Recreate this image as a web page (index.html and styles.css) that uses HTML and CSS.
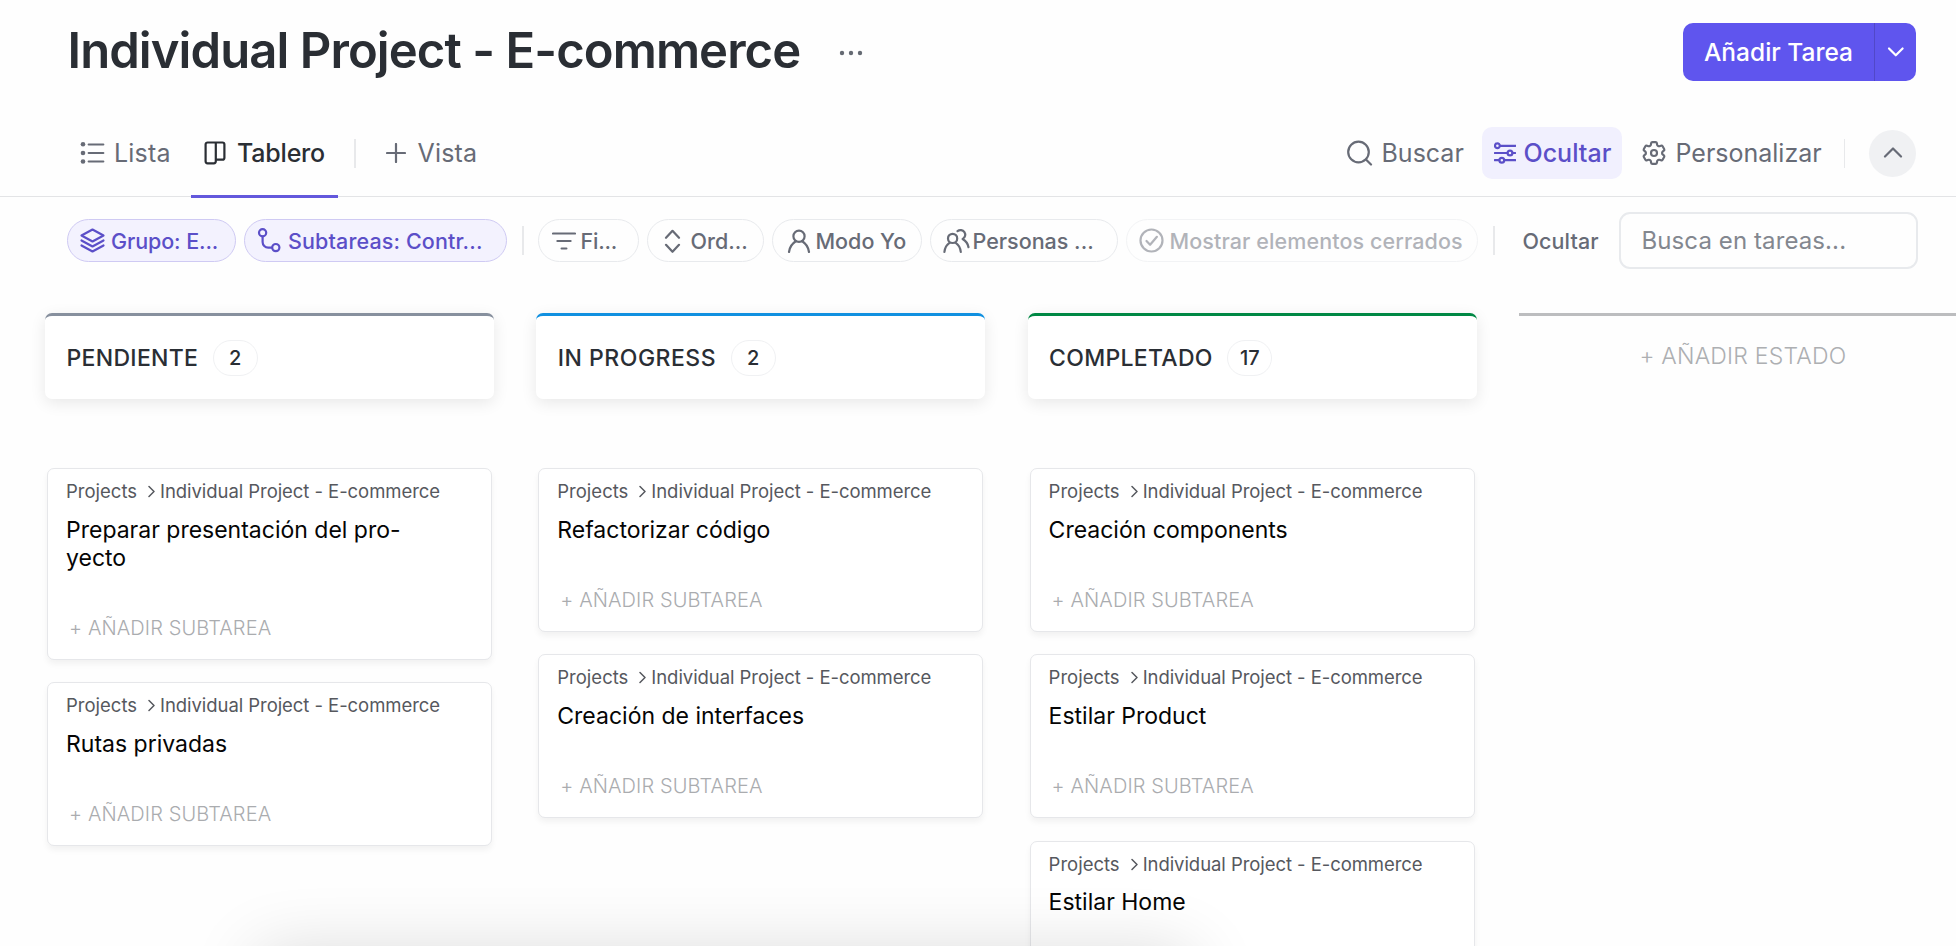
FILE: index.html
```html
<!DOCTYPE html>
<html lang="es">
<head>
<meta charset="utf-8">
<title>Individual Project - E-commerce</title>
<link rel="stylesheet" href="styles.css">
</head>
<body>
<header class="title-row">
  <h1 class="title">Individual Project - E-commerce</h1>
  <svg class="dots" width="24" height="6" viewBox="0 0 24 6"><circle cx="3" cy="3" r="2.2"/><circle cx="12" cy="3" r="2.2"/><circle cx="21" cy="3" r="2.2"/></svg>
  <div class="add-task">
    <button class="add-main">Añadir Tarea</button>
    <button class="add-more" aria-label="Más"><svg class="icon" width="18" height="12" viewBox="0 0 18 12"><path d="M2 2.500 8.800 9.300l6.800-6.800"/></svg></button>
  </div>
</header>

<nav class="nav">
  <a class="tab tab-list"><svg class="icon" width="25" height="24" viewBox="0 0 25 24"><g class="fill"><circle cx="3" cy="3.2" r="2.3"/><circle cx="3" cy="12" r="2.3"/><circle cx="3" cy="20.5" r="2.3"/></g><path d="M8.7 3.5h14.6M8.7 12h14.6M8.7 20.5h14.6"/></svg><span>Lista</span></a>
  <a class="tab tab-board"><svg class="icon" width="22" height="24" viewBox="0 0 22 24"><path d="M3.6 1.5h14.8a2 2 0 0 1 2 2v13.2a2 2 0 0 1-2 2h-6.6M3.6 1.5a2 2 0 0 0-2 2v16.8a2 2 0 0 0 2 2h6.2a2 2 0 0 0 2-2V1.5"/></svg><span>Tablero</span></a>
  <i class="rule"></i>
  <a class="tab tab-add"><svg class="icon" width="20" height="20" viewBox="0 0 20 20"><path d="M1 10h18M10 1v18"/></svg><span>Vista</span></a>

  <div class="tools">
    <a class="tool tool-search"><svg class="icon" width="26" height="26" viewBox="0 0 26 26"><circle cx="11.500" cy="12" r="10.3"/><path d="m19 19.5 5 5"/></svg><span>Buscar</span></a>
    <a class="tool tool-hide"><svg class="icon" width="22" height="22" viewBox="0 0 22 22"><path d="M6 3.8h15.5M.8 11h12.4M18.6 11h2.6M.8 18.2h4.4M10.6 18.2h10.9"/><circle cx="3.4" cy="3.8" r="2.4"/><circle cx="16" cy="11" r="2.4"/><circle cx="7.8" cy="18.2" r="2.4"/></svg><span>Ocultar</span></a>
    <a class="tool tool-custom"><svg class="icon" width="26" height="26" viewBox="1.2 1.2 21.6 21.6"><path class="thin" d="M9.594 3.94c.09-.542.56-.94 1.11-.94h2.593c.55 0 1.02.398 1.11.94l.213 1.281c.063.374.313.686.645.87.074.04.147.083.22.127.325.196.72.257 1.075.124l1.217-.456a1.125 1.125 0 0 1 1.37.49l1.296 2.247a1.125 1.125 0 0 1-.26 1.431l-1.003.827c-.293.241-.438.613-.43.992a7.723 7.723 0 0 1 0 .255c-.008.378.137.75.43.991l1.004.827c.424.35.534.955.26 1.43l-1.298 2.247a1.125 1.125 0 0 1-1.369.491l-1.217-.456c-.355-.133-.75-.072-1.076.124a6.47 6.47 0 0 1-.22.128c-.331.183-.581.495-.644.869l-.213 1.281c-.09.543-.56.94-1.11.94h-2.594c-.55 0-1.019-.398-1.11-.94l-.213-1.281c-.062-.374-.312-.686-.644-.87a6.52 6.52 0 0 1-.22-.127c-.325-.196-.72-.257-1.076-.124l-1.217.456a1.125 1.125 0 0 1-1.369-.49l-1.297-2.247a1.125 1.125 0 0 1 .26-1.431l1.004-.827c.292-.24.437-.613.43-.991a6.932 6.932 0 0 1 0-.255c.007-.38-.138-.751-.43-.992l-1.004-.827a1.125 1.125 0 0 1-.26-1.43l1.297-2.247a1.125 1.125 0 0 1 1.37-.491l1.216.456c.356.133.751.072 1.076-.124.072-.044.146-.086.22-.128.332-.183.582-.495.644-.869l.214-1.28Z"/><circle class="thin" cx="12" cy="12" r="2.5"/></svg><span>Personalizar</span></a>
    <i class="rule"></i>
    <button class="collapse" aria-label="Contraer"><svg class="icon" width="20" height="12" viewBox="0 0 20 12"><path d="m2 9.500 8-8 8 8"/></svg></button>
  </div>
</nav>

<section class="filters">
  <button class="pill pill-on pill-group"><svg class="icon" width="26" height="26" viewBox="0 0 26 26"><path d="M12.500 1.500 23.500 7.500 12.500 13.500 1.500 7.500ZM1.500 12.500l11 6 11-6M1.500 17.500l11 6 11-6"/></svg><span>Grupo: E...</span></button>
  <button class="pill pill-on pill-sub"><svg class="icon" width="24" height="25" viewBox="0 0 24 25"><circle cx="5.6" cy="4.800" r="3.6"/><circle cx="18.8" cy="19.600" r="3.6"/><path d="M5.600 8.600v5.400a5.600 5.600 0 0 0 5.600 5.600h3.800"/></svg><span>Subtareas: Contr...</span></button>
  <i class="rule"></i>
  <button class="pill pill-filter"><svg class="icon" width="24" height="22" viewBox="0 0 24 22"><path d="M1 3.5h22M5.4 11h13.2M9.6 18.5h4.8"/></svg><span>Fi...</span></button>
  <button class="pill pill-order"><svg class="icon" width="24" height="24" viewBox="0 0 24 24"><path d="m6 8.8 6.5-7 6.5 7M6 15.8l6.5 7 6.5-7"/></svg><span>Ord...</span></button>
  <button class="pill pill-me"><svg class="icon" width="24" height="24" viewBox="0 0 24 24"><circle cx="12" cy="7.2" r="5.6"/><path d="M2 23c.6-5.2 3-8.4 6.8-10.8M22 23c-.6-5.2-3-8.4-6.8-10.8"/></svg><span>Modo Yo</span></button>
  <button class="pill pill-people"><svg class="icon" width="27" height="26" viewBox="0 0 27 26"><circle cx="9.6" cy="10.4" r="4.6"/><path d="M1.4 24c.4-4.400 2.400-7.400 5.400-9.400M17.800 24c-.4-4.400-2.400-7.400-5.400-9.400M14.500 3.200a4.700 4.700 0 1 1 5.300 7.700M19.600 11c3.300 1.900 5.300 4.600 5.900 8.200"/></svg><span>Personas ...</span></button>
  <button class="pill pill-closed"><svg class="icon" width="25" height="25" viewBox="0 0 25 25"><circle cx="12.5" cy="12.500" r="11"/><path d="m7.500 13 3.600 3.800 6.800-8"/></svg><span>Mostrar elementos cerrados</span></button>
  <i class="rule"></i>
  <span class="hide-label">Ocultar</span>
  <div class="search">Busca en tareas...</div>
</section>

<main class="board">
  <section class="column">
    <header class="status status-todo"><span class="status-name">PENDIENTE</span><span class="count">2</span></header>
    <div class="cards">
      <article class="card">
        <div class="crumbs"><span>Projects</span><svg class="icon" width="8" height="14" viewBox="0 0 8 14"><path d="m1 2.500 5 5-5 5"/></svg><span class="crumb-list">Individual Project - E-commerce</span></div>
        <div class="name">Preparar presentación del pro-<br>yecto</div>
        <div class="subtask">+ AÑADIR SUBTAREA</div>
      </article>
      <article class="card">
        <div class="crumbs"><span>Projects</span><svg class="icon" width="8" height="14" viewBox="0 0 8 14"><path d="m1 2.500 5 5-5 5"/></svg><span class="crumb-list">Individual Project - E-commerce</span></div>
        <div class="name">Rutas privadas</div>
        <div class="subtask">+ AÑADIR SUBTAREA</div>
      </article>
    </div>
  </section>

  <section class="column">
    <header class="status status-progress"><span class="status-name wide">IN PROGRESS</span><span class="count">2</span></header>
    <div class="cards">
      <article class="card">
        <div class="crumbs"><span>Projects</span><svg class="icon" width="8" height="14" viewBox="0 0 8 14"><path d="m1 2.500 5 5-5 5"/></svg><span class="crumb-list">Individual Project - E-commerce</span></div>
        <div class="name">Refactorizar código</div>
        <div class="subtask">+ AÑADIR SUBTAREA</div>
      </article>
      <article class="card">
        <div class="crumbs"><span>Projects</span><svg class="icon" width="8" height="14" viewBox="0 0 8 14"><path d="m1 2.500 5 5-5 5"/></svg><span class="crumb-list">Individual Project - E-commerce</span></div>
        <div class="name">Creación de interfaces</div>
        <div class="subtask">+ AÑADIR SUBTAREA</div>
      </article>
    </div>
  </section>

  <section class="column">
    <header class="status status-done"><span class="status-name">COMPLETADO</span><span class="count">17</span></header>
    <div class="cards">
      <article class="card">
        <div class="crumbs"><span>Projects</span><svg class="icon" width="8" height="14" viewBox="0 0 8 14"><path d="m1 2.500 5 5-5 5"/></svg><span class="crumb-list">Individual Project - E-commerce</span></div>
        <div class="name">Creación components</div>
        <div class="subtask">+ AÑADIR SUBTAREA</div>
      </article>
      <article class="card">
        <div class="crumbs"><span>Projects</span><svg class="icon" width="8" height="14" viewBox="0 0 8 14"><path d="m1 2.500 5 5-5 5"/></svg><span class="crumb-list">Individual Project - E-commerce</span></div>
        <div class="name">Estilar Product</div>
        <div class="subtask">+ AÑADIR SUBTAREA</div>
      </article>
      <article class="card card-cut">
        <div class="crumbs"><span>Projects</span><svg class="icon" width="8" height="14" viewBox="0 0 8 14"><path d="m1 2.500 5 5-5 5"/></svg><span class="crumb-list">Individual Project - E-commerce</span></div>
        <div class="name">Estilar Home</div>
      </article>
    </div>
  </section>

  <section class="new-status">+ AÑADIR ESTADO</section>
</main>
<div class="tray-shadow"></div>
</body>
</html>
```
FILE: styles.css
```css
* { box-sizing: border-box; }

body {
  margin: 0;
  height: 946px;
  position: relative;
  overflow: hidden;
  background: #fefefe;
  color: #2a2e34;
  font-family: Inter, "Liberation Sans", sans-serif;
  display: flex;
  flex-direction: column;
}

button {
  font: inherit;
  color: inherit;
  border: 0;
  background: none;
  padding: 0;
  letter-spacing: inherit;
}

span { white-space: nowrap; }

.icon {
  flex: none;
  fill: none;
  stroke: currentColor;
  stroke-width: 2.2;
  stroke-linecap: round;
  stroke-linejoin: round;
}
.icon .fill { fill: currentColor; stroke: none; }
.icon .thin { stroke-width: 1.8; }

.rule { flex: none; width: 1.5px; height: 29px; background: #e8e9eb; }

/* Title */
.title-row {
  height: 110px;
  flex: none;
  display: flex;
  align-items: center;
  padding: 0 40px 6px 67.500px;
}
.title {
  margin: 0 0 3px;
  font-size: 49px;
  line-height: 60px;
  font-weight: 600;
  letter-spacing: -0.92px;
  white-space: nowrap;
}
.dots { margin-left: 39px; margin-top: 2px; fill: #656a73; }
.add-task {
  margin-left: auto;
  width: 233px;
  height: 58px;
  display: flex;
  border-radius: 10px;
  background: #5f55ee;
  color: #fff;
}
.add-main {
  width: 191px;
  padding-left: 21px;
  text-align: left;
  font-size: 24.5px;
  font-weight: 500;
  letter-spacing: 0;
}
.add-more {
  flex: 1;
  display: grid;
  place-items: center;
  border-left: 1px solid #5148c8;
}

/* View tabs */
.nav {
  height: 87px;
  flex: none;
  display: flex;
  align-items: center;
  padding: 0 40px 0 80px;
  border-bottom: 1px solid #e3e4e6;
  font-size: 25px;
  color: #676b76;
}
.tab, .tool { display: flex; align-items: center; height: 50px; flex: none; }
.tab-list { width: 111px; gap: 9px; letter-spacing: 0.2px; }
.tab-board {
  position: relative;
  width: 147px;
  height: 86px;
  padding-left: 13px;
  gap: 11px;
  color: #2a2e34;
  font-weight: 500;
  letter-spacing: -0.2px;
}
.tab-board::after {
  content: "";
  position: absolute;
  left: 0;
  bottom: -2px;
  width: 147px;
  height: 3px;
  background: #6358dc;
}
.tab-board + .rule { margin-left: 16px; }
.tab-add { margin-left: 30px; gap: 12px; letter-spacing: 0.2px; }
.tools { margin-left: auto; display: flex; align-items: center; }
.tool-search { width: 135px; gap: 9px; }
.tool-hide {
  width: 140px;
  height: 52px;
  padding-left: 12px;
  gap: 8px;
  border-radius: 10px;
  background: #f1f0fe;
  color: #5b4fc8;
  font-weight: 500;
}
.tool-custom { margin-left: 19.500px; width: 202.500px; gap: 8.500px; }
.collapse {
  margin-left: 24px;
  width: 47px;
  height: 47px;
  border-radius: 50%;
  background: #f0f1f3;
  display: grid;
  place-items: center;
}

/* Filters */
.filters {
  height: 87px;
  flex: none;
  display: flex;
  align-items: center;
  padding-left: 67px;
  font-size: 21.500px;
  font-weight: 500;
  color: #676b76;
}
.pill {
  flex: none;
  display: flex;
  align-items: center;
  height: 43px;
  padding-left: 12px;
  margin-right: 8px;
  border: 1px solid #e8eaed;
  border-radius: 22px;
}
.pill-on { background: #f3f2fe; border-color: #cfcaf3; color: #5b4fc8; }
.pill-group { width: 169px; gap: 5px; letter-spacing: -0.1px; }
.pill-sub { width: 263px; gap: 7px; letter-spacing: 0.13px; }
.pill-sub + .rule { margin: 0 14px 0 7px; }
.pill-filter { width: 101px; padding-left: 13px; gap: 5px; letter-spacing: -0.2px; }
.pill-order { width: 117px; padding-left: 12.500px; gap: 6.500px; }
.pill-me { width: 150px; padding-left: 14px; gap: 5px; }
.pill-people { width: 188px; gap: 3px; }
.pill-closed { width: 352px; gap: 6px; opacity: 0.5; letter-spacing: 0.1px; }
.pill-closed + .rule { margin: 0 28px 0 7.500px; }
.hide-label { letter-spacing: 0.1px; }
.search {
  margin-left: auto;
  margin-right: 38.500px;
  width: 299px;
  height: 57px;
  padding-left: 21px;
  border: 2px solid #e8eaed;
  border-radius: 11px;
  font-size: 24px;
  line-height: 53px;
  font-weight: 400;
  letter-spacing: 0.1px;
  color: #83878f;
}

/* Board */
.board {
  flex: 1;
  min-height: 0;
  overflow: hidden;
  display: flex;
  gap: 42.300px;
  padding: 29px 0 0 45px;
}
.column { flex: none; width: 449px; }
.status {
  height: 86px;
  display: flex;
  align-items: center;
  padding-left: 21.500px;
  border-top: 3px solid;
  border-radius: 7px;
  background: #fff;
  box-shadow: 0 4px 16px rgba(0, 0, 0, 0.09);
}
.status-todo { border-color: #87909e; }
.status-progress { border-color: #1090e0; }
.status-done { border-color: #008844; }
.status-name {
  font-size: 23px;
  font-weight: 450;
  letter-spacing: 0.3px;
  color: #2a2e34;
}
.status-name.wide { letter-spacing: 0.500px; }
.count {
  width: 45px;
  height: 36px;
  margin-left: 14.500px;
  border: 1px solid #f0f1f3;
  border-radius: 18px;
  text-align: center;
  font-size: 20px;
  line-height: 34px;
  font-weight: 450;
}
.cards {
  margin-top: 69px;
  padding: 0 2px;
  display: flex;
  flex-direction: column;
  gap: 22.300px;
}
.card {
  padding: 8px 17px 17px 18px;
  border: 1px solid #e6e7ea;
  border-radius: 7px;
  background: #fff;
  box-shadow: 0 4px 6px rgba(0, 0, 0, 0.05);
}
.card-cut { height: 164px; }
.crumbs {
  height: 28px;
  display: flex;
  align-items: center;
  font-size: 18.500px;
  color: #56585e;
}
.crumbs .icon { margin: 0 4px 0 11px; stroke-width: 1.500; }
.crumb-list { letter-spacing: -0.06px; }
.name {
  margin-top: 10.500px;
  font-size: 23px;
  line-height: 28px;
  color: #050505;
}
.subtask {
  margin: 42.500px 0 0 3px;
  font-size: 20px;
  line-height: 28px;
  font-weight: 300;
  letter-spacing: 0.1px;
  color: #aaacaf;
}
.new-status {
  flex: 1;
  padding: 26px 0 0 120.500px;
  border-top: 3px solid #bcbdbf;
  font-size: 23px;
  line-height: 28px;
  font-weight: 300;
  letter-spacing: 0.2px;
  color: #adafb2;
  white-space: nowrap;
}

/* Shadow cast by the tray docked under the board */
.tray-shadow {
  position: absolute;
  left: 290px;
  bottom: 0;
  width: 870px;
  height: 0;
  box-shadow: 0 40px 70px 32px rgba(0, 0, 0, 0.16);
}
```
